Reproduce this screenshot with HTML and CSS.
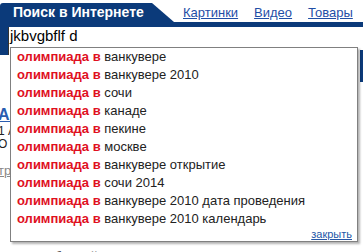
FILE: index.html
```
<!DOCTYPE html>
<html>
<head>
    <link rel="stylesheet" href="styles.css">
</head>

<body>
    <div class="search-box">
        <div class="search-head">
            <div class="search-tab">Поиск в Интернете</div>
            <a href="#" class="head-link">Картинки</a>
            <a href="#" class="head-link">Видео</a>
            <a href="#" class="head-link">Товары</a>
        </div>
        <div class="search-bar"></div>
        <div class="search-row">
            <div class="search-input">jkbvgbflf d</div>
        </div>
        <div class="search-btn"></div>

        <div class="suggest">
            <div class="suggest-item"><b>олимпиада в</b> ванкувере</div>
            <div class="suggest-item"><b>олимпиада в</b> ванкувере 2010</div>
            <div class="suggest-item"><b>олимпиада в</b> сочи</div>
            <div class="suggest-item"><b>олимпиада в</b> канаде</div>
            <div class="suggest-item"><b>олимпиада в</b> пекине</div>
            <div class="suggest-item"><b>олимпиада в</b> москве</div>
            <div class="suggest-item"><b>олимпиада в</b> ванкувере открытие</div>
            <div class="suggest-item"><b>олимпиада в</b> сочи 2014</div>
            <div class="suggest-item"><b>олимпиада в</b> ванкувере 2010 дата проведения</div>
            <div class="suggest-item"><b>олимпиада в</b> ванкувере 2010 календарь</div>
            <div class="suggest-close"><a href="#">закрыть</a></div>
        </div>
    </div>

    <div class="results">
        <a href="#" class="result-title">Аз</a>
        <div class="result-text">1 А</div>
        <div class="result-text">О</div>
        <a href="#" class="result-more">тр</a>
        <div class="result-bottom">дии - свободной энциклопедии пропорцую</div>
    </div>
</body>
</html>
```

FILE: styles.css
```
body {
    margin: 0;
    background: #fff;
    font-family: "Liberation Sans", Arial, sans-serif;
    overflow: hidden;
}

.search-box {
    position: relative;
    z-index: 2;
}

.search-head {
    display: flex;
    align-items: flex-end;
    height: 19px;
    padding-top: 3px;
}

.search-tab {
    width: 161px;
    height: 19px;
    padding-left: 13px;
    background: #0b3a7a;
    color: #fff;
    font-size: 14px;
    font-weight: bold;
    line-height: 19px;
    border-top-left-radius: 3px;
    clip-path: polygon(0 0, 152px 0, 174px 100%, 0 100%);
}

.head-link {
    margin-left: 16px;
    margin-bottom: 1px;
    color: #1f4ea6;
    font-size: 13px;
    line-height: 16px;
}

.search-tab + .head-link {
    margin-left: 9px;
}

.search-bar {
    height: 5px;
    background: #0b3a7a;
}

.search-row {
    display: flex;
    height: 28px;
    padding-left: 8px;
    background: linear-gradient(to right, #0b3a7a 8px, transparent 8px);
}

.search-input {
    flex: 1;
    background: #fff;
    border-left: 1px solid #333;
    padding-left: 1px;
    font-size: 15px;
    line-height: 18px;
    color: #000;
}

/* right edge of the search button, cut off by the window */
.search-btn {
    position: absolute;
    left: 360px;
    top: 50px;
    width: 3px;
    height: 32px;
    background: #0b3a7a;
}

.suggest {
    position: absolute;
    left: 10px;
    top: 47px;
    width: 346px;
    height: 193px;
    background: #fff;
    border: 1px solid #808080;
    box-shadow: 2px 2px 2px rgba(0, 0, 0, 0.3);
}

.suggest-item {
    height: 18px;
    padding-left: 6px;
    font-size: 13px;
    line-height: 18px;
    color: #222;
    white-space: nowrap;
}

.suggest-item b {
    color: #e0101e;
}

.suggest-close {
    height: 12px;
    padding-right: 5px;
    text-align: right;
    font-size: 11px;
    line-height: 12px;
}

.suggest-close a {
    color: #2557a7;
}

.results {
    position: relative;
    z-index: 1;
    margin-left: -2px;
    padding-top: 50px;
}

.result-title {
    display: block;
    color: #2a5db0;
    font-size: 16px;
    font-weight: bold;
    line-height: 20px;
}

.result-text {
    font-size: 12px;
    line-height: 13px;
    color: #222;
}

.result-more {
    display: block;
    margin-top: 12px;
    color: #888;
    font-size: 13px;
    line-height: 16px;
}

.result-bottom {
    margin-top: 70px;
    padding-left: 2px;
    font-size: 13px;
    line-height: 16px;
    color: #333;
}
```
